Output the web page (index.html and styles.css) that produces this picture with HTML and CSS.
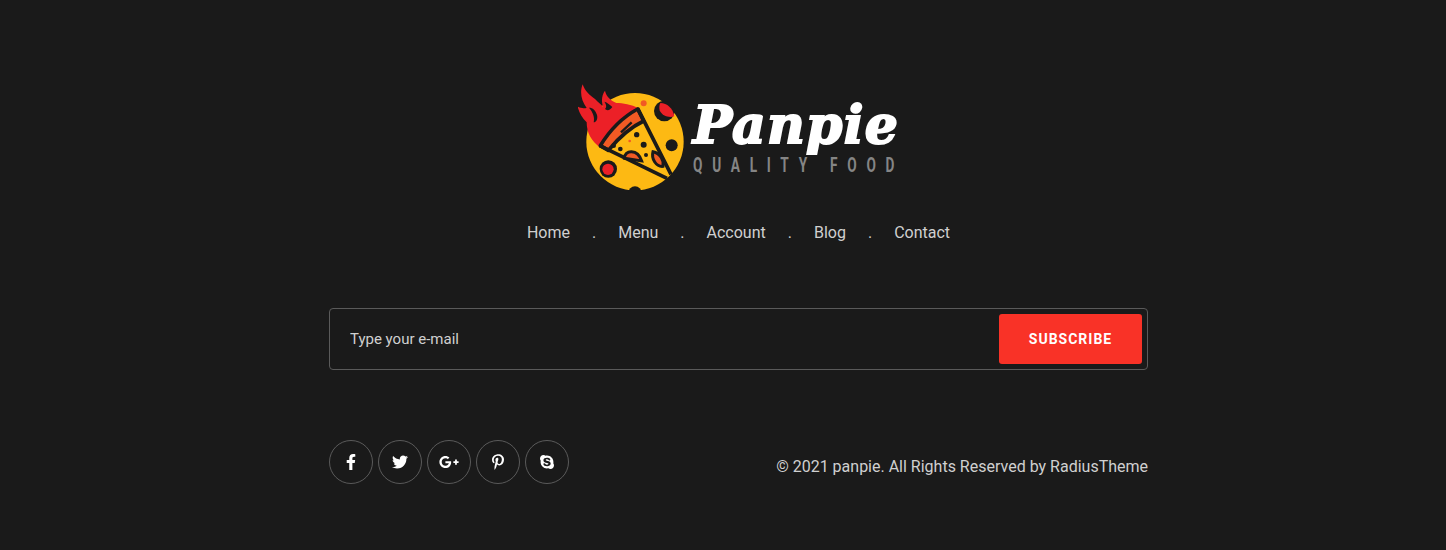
FILE: index.html
```html
<!DOCTYPE html>
<html lang="en">
  <head>
    <meta charset="utf-8">
    <title>Panpie</title>
    <meta name="viewport" content="width=device-width, initial-scale=1">
    <link rel="stylesheet" href="styles.css">
  </head>
  <body>
    <footer class="footer">
      <a class="logo" href="#">
        <svg class="logo-mark" viewBox="21 27 324 327" width="108" height="109">
          <circle cx="192" cy="200" r="146" fill="#fdb913"/>
          <!-- flame -->
          <path fill="#ec2027" d="M88 218C60 198 47 172 47 142C34 130 24 112 20 95C30 101 40 100 47 99C30 76 26 50 35 28C42 50 56 60 72 72C84 84 92 90 97 96C90 80 92 60 102 47C106 66 120 76 136 84C156 84 180 88 204 100Z"/>
          <path fill="#1a1a1a" d="M54 98C66 98 74 106 78 120C81 132 76 142 68 142C72 128 66 112 54 98Z"/>
          <path fill="#1a1a1a" d="M100 80C108 82 118 90 124 96C118 106 108 108 102 102C108 96 106 88 100 80Z"/>
          <!-- moon craters -->
          <circle cx="280" cy="108" r="31" fill="#1a1a1a"/>
          <path fill="#ec2027" d="M268 84C288 84 306 100 310 124C294 130 272 122 266 106C264 98 265 90 268 84Z"/>
          <circle cx="218" cy="85" r="9" fill="#f15a24"/>
          <circle cx="302" cy="211" r="18" fill="#1a1a1a"/>
          <circle cx="112" cy="282" r="26" fill="#1a1a1a"/>
          <circle cx="111" cy="283" r="17" fill="#ec2027"/>
          <circle cx="192" cy="354" r="20" fill="#1a1a1a"/>
          <!-- slice -->
          <path fill="#f15a24" stroke="#1a1a1a" stroke-width="11" stroke-linejoin="round" d="M88 212C116 166 152 128 200 102L218 138C176 158 140 192 112 226Z"/>
          <path fill="none" stroke="#1a1a1a" stroke-width="11" d="M200 100L300 298M86 212L288 310"/>
          <path fill="none" stroke="#1a1a1a" stroke-width="7" d="M150 172L182 142"/>
          <path fill="#f15a24" stroke="#1a1a1a" stroke-width="9" d="M160 250C160 224 200 220 212 258Z"/>
          <path fill="#f15a24" stroke="#1a1a1a" stroke-width="9" d="M246 230C268 234 280 258 276 274C256 276 240 252 246 230Z"/>
          <circle cx="197" cy="179" r="8" fill="#1a1a1a"/>
          <circle cx="218" cy="209" r="9" fill="#1a1a1a"/>
          <circle cx="176" cy="198" r="4" fill="#f15a24"/>
          <circle cx="148" cy="222" r="7" fill="#1a1a1a"/>
          <circle cx="128" cy="212" r="7" fill="#1a1a1a"/>
          <circle cx="225" cy="240" r="6" fill="#1a1a1a"/>
        </svg>
        <span class="logo-text">
          <span class="logo-name">Panpie</span>
          <span class="logo-tag">QUALITY FOOD</span>
        </span>
      </a>

      <nav class="menu">
        <a href="#">Home</a>
        <span class="dot">.</span>
        <a href="#">Menu</a>
        <span class="dot">.</span>
        <a href="#">Account</a>
        <span class="dot">.</span>
        <a href="#">Blog</a>
        <span class="dot">.</span>
        <a href="#">Contact</a>
      </nav>

      <form class="subscribe">
        <input class="subscribe-input" type="text" placeholder="Type your e-mail">
        <button class="subscribe-btn" type="button">SUBSCRIBE</button>
      </form>

      <div class="bottom">
        <div class="social">
          <a href="#"><svg class="icon" viewBox="0 0 320 512" width="10" height="16"><path d="M279.14 288l14.22-92.66h-88.91v-60.13c0-25.35 12.42-50.06 52.24-50.06h40.42V6.26S260.43 0 225.36 0c-73.22 0-121.08 44.38-121.08 124.72v70.62H22.89V288h81.39v224h100.17V288z"/></svg></a>
          <a href="#"><svg class="icon" viewBox="0 0 512 512" width="16" height="16"><path d="M459.37 151.716c.325 4.548.325 9.097.325 13.645 0 138.72-105.583 298.558-298.558 298.558-59.452 0-114.68-17.219-161.137-47.106 8.447.974 16.568 1.299 25.34 1.299 49.055 0 94.213-16.568 130.274-44.832-46.132-.975-84.792-31.188-98.112-72.772 6.498.974 12.995 1.624 19.818 1.624 9.421 0 18.843-1.3 27.614-3.573-48.081-9.747-84.143-51.98-84.143-102.985v-1.299c13.969 7.797 30.214 12.67 47.431 13.319-28.264-18.843-46.781-51.005-46.781-87.391 0-19.492 5.197-37.36 14.294-52.954 51.655 63.675 129.3 105.258 216.365 109.807-1.624-7.797-2.599-15.918-2.599-24.04 0-57.828 46.782-104.934 104.934-104.934 30.213 0 57.502 12.67 76.67 33.137 23.715-4.548 46.456-13.32 66.599-25.34-7.798 24.366-24.366 44.833-46.132 57.827 21.117-2.273 41.584-8.122 60.426-16.243-14.292 20.791-32.161 39.308-52.628 54.253z"/></svg></a>
          <a href="#"><svg class="icon" viewBox="0 0 640 512" width="20" height="16"><path d="M386.061 228.496c1.834 9.692 3.143 19.384 3.143 31.956C389.204 370.205 315.599 448 204.8 448c-106.084 0-192-85.915-192-192s85.916-192 192-192c51.864 0 95.083 18.859 128.611 50.292l-52.126 50.03c-14.145-13.621-39.028-29.599-76.485-29.599-65.484 0-118.92 54.221-118.92 121.277 0 67.056 53.436 121.277 118.92 121.277 75.961 0 104.513-54.745 108.965-82.773H204.8v-66.009h181.261zm185.406 6.437V179.2h-56.001v55.733h-55.733v56.001h55.733v55.733h56.001v-55.733H627.2v-56.001h-55.733z"/></svg></a>
          <a href="#"><svg class="icon" viewBox="0 0 384 512" width="12" height="16"><path d="M204 6.5C101.4 6.5 0 74.9 0 185.6 0 256 39.6 296 63.6 296c9.9 0 15.6-27.6 15.6-35.4 0-9.3-23.7-29.1-23.7-67.8 0-80.4 61.2-137.4 140.4-137.4 68.1 0 118.5 38.7 118.5 109.8 0 53.1-21.3 152.7-90.3 152.7-24.9 0-46.2-18-46.2-43.8 0-37.8 26.4-74.4 26.4-113.4 0-66.2-93.9-54.2-93.9 25.8 0 16.8 2.1 35.4 9.6 50.7-13.8 59.4-42 147.9-42 209.1 0 18.9 2.7 37.5 4.5 56.4 3.4 3.8 1.7 3.4 6.9 1.5 50.4-69 48.6-82.5 71.4-172.8 12.3 23.4 44.1 36 69.3 36 106.2 0 153.9-103.5 153.9-196.8C384 71.3 298.2 6.5 204 6.5z"/></svg></a>
          <a href="#"><svg class="icon" viewBox="0 0 448 512" width="14" height="16"><path d="M424.7 299.8c2.9-14 4.7-28.9 4.7-43.8 0-113.5-91.9-205.3-205.3-205.3-14.9 0-29.7 1.7-43.8 4.7C161.3 40.7 137.7 32 112 32 50.2 32 0 82.2 0 144c0 25.7 8.7 49.3 23.3 68.2-2.9 14-4.7 28.9-4.7 43.8 0 113.5 91.9 205.3 205.3 205.3 14.9 0 29.7-1.7 43.8-4.7 19 14.6 42.6 23.3 68.2 23.3 61.8 0 112-50.2 112-112 .1-25.6-8.6-49.2-23.2-68.1zm-194.6 91.5c-65.6 0-120.5-29.2-120.5-65 0-16 9-30.6 29.5-30.6 31.2 0 34.1 44.9 88.1 44.9 25.7 0 42.3-11.4 42.3-26.3 0-18.7-16-21.6-42-28-62.5-15.4-117.8-22-117.8-87.2 0-59.2 58.6-81.1 109.1-81.1 55.1 0 110.8 21.9 110.8 55.4 0 16.9-11.4 31.8-30.3 31.8-28.3 0-29.2-33.5-75-33.5-25.7 0-42 7-42 22.5 0 19.8 20.8 21.8 69.1 33 41.4 9.3 90.7 26.8 90.7 77.6 0 59.1-57.1 86.5-112 86.5z"/></svg></a>
        </div>
        <p class="copyright">© 2021 panpie. All Rights Reserved by RadiusTheme</p>
      </div>
    </footer>
  </body>
</html>
```

FILE: styles.css
```css
* {
  box-sizing: border-box;
}
html, body {
  margin: 0;
  height: 100%;
}
body {
  background-color: #1a1a1a;
  color: #d0d0d0;
  font-family: Roboto, "Liberation Sans", sans-serif;
  font-size: 16px;
  overflow: hidden;
}
a {
  color: inherit;
  text-decoration: none;
}
.footer {
  width: 819px;
  margin-left: 329px;
  padding-top: 84px;
}
.logo {
  display: flex;
  justify-content: center;
  align-items: flex-start;
  gap: 7px;
  height: 109px;
}
.logo-text {
  display: flex;
  flex-direction: column;
  width: 206px;
  padding-top: 11px;
}
.logo-name {
  font-family: "DejaVu Serif", serif;
  font-weight: 700;
  font-style: italic;
  font-size: 52px;
  line-height: 60px;
  letter-spacing: 1.3px;
  color: #fff;
  -webkit-text-stroke: 2px #fff;
}
.logo-tag {
  font-family: Roboto, sans-serif;
  font-size: 21px;
  font-weight: 700;
  line-height: 20px;
  letter-spacing: 15px;
  color: #858585;
  white-space: nowrap;
  transform: scaleX(.65);
  transform-origin: left center;
}
.menu {
  display: flex;
  justify-content: center;
  gap: 22px;
  margin-top: 30px;
  line-height: 20px;
}
.subscribe {
  display: flex;
  align-items: center;
  justify-content: space-between;
  height: 62px;
  margin-top: 65px;
  padding: 0 5px 0 20px;
  border: 1px solid #5a5a5a;
  border-radius: 4px;
}
.subscribe-input {
  flex: 1;
  padding: 0;
  border: 0;
  outline: 0;
  background: transparent;
  color: #d0d0d0;
  font-family: inherit;
  font-size: 15px;
}
.subscribe-input::placeholder {
  color: #d0d0d0;
  opacity: 1;
}
.subscribe-btn {
  width: 143px;
  height: 50px;
  border: 0;
  border-radius: 3px;
  background-color: #f93227;
  color: #fff;
  font-family: inherit;
  font-size: 14px;
  font-weight: 700;
  letter-spacing: 1px;
}
.bottom {
  display: flex;
  justify-content: space-between;
  align-items: center;
  margin-top: 70px;
}
.social {
  display: flex;
  gap: 5px;
}
.social a {
  display: flex;
  align-items: center;
  justify-content: center;
  width: 44px;
  height: 44px;
  border: 1px solid #5a5a5a;
  border-radius: 50%;
}
.icon {
  fill: #fff;
}
.copyright {
  margin: 9px 0 0;
  line-height: 20px;
}
```
